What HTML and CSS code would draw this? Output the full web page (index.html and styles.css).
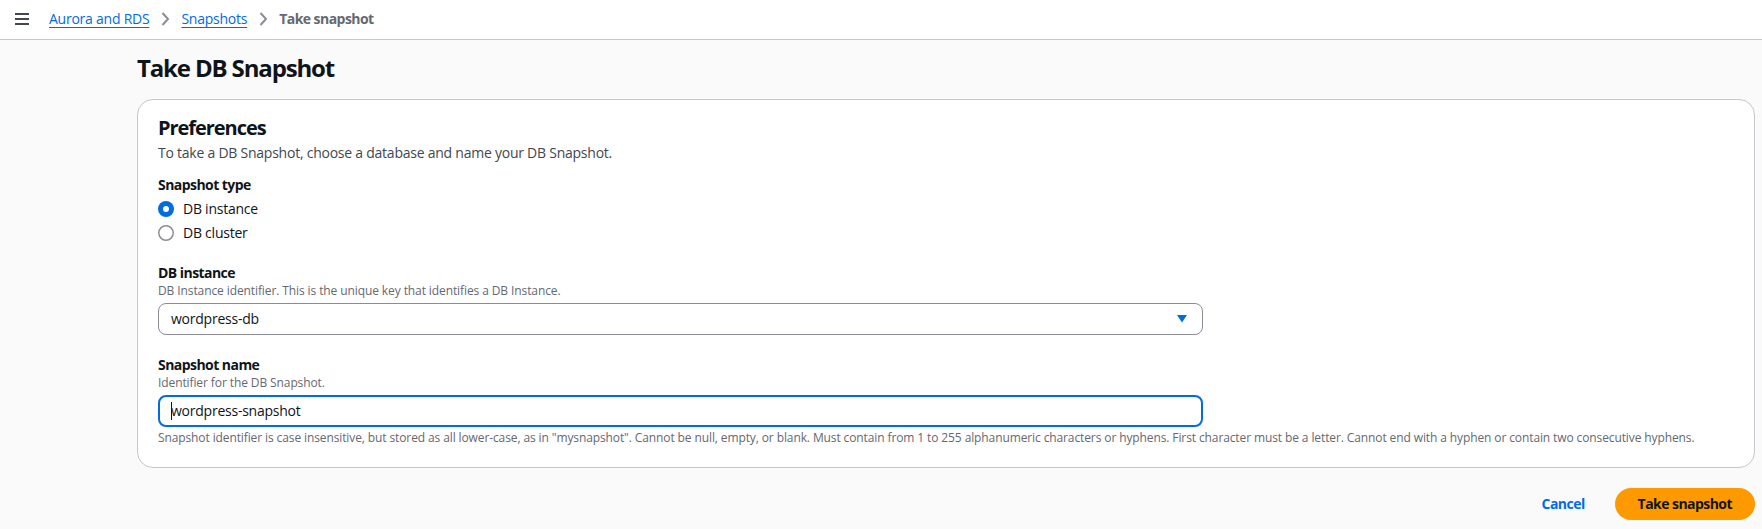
FILE: index.html
```html
<!DOCTYPE html>
<html lang="en">
<head>
<meta charset="utf-8">
<title>Take DB Snapshot</title>
<link rel="stylesheet" href="styles.css">
</head>
<body>
<header class="topbar">
  <button class="menu-btn" aria-label="Open navigation">
    <svg viewBox="0 0 16 16" width="16" height="16" aria-hidden="true"><path d="M15 8H1M15 3H1M15 13H1" fill="none" stroke="#424650" stroke-width="2"/></svg>
  </button>
  <nav class="crumbs" aria-label="Breadcrumbs">
    <a class="crumb-link" href="#">Aurora and RDS</a>
    <svg class="chev" viewBox="0 0 16 16" width="16" height="16" aria-hidden="true"><path d="m5.5 2 5.5 6-5.5 6" fill="none" stroke="#8c8c94" stroke-width="2"/></svg>
    <a class="crumb-link" href="#">Snapshots</a>
    <svg class="chev" viewBox="0 0 16 16" width="16" height="16" aria-hidden="true"><path d="m5.5 2 5.5 6-5.5 6" fill="none" stroke="#8c8c94" stroke-width="2"/></svg>
    <span class="crumb-current">Take snapshot</span>
  </nav>
</header>
<main class="content">
  <h1 class="page-title">Take DB Snapshot</h1>
  <section class="card">
    <h2 class="card-title">Preferences</h2>
    <p class="card-desc">To take a DB Snapshot, choose a database and name your DB Snapshot.</p>

    <div class="field field-radios">
      <div class="field-label">Snapshot type</div>
      <div class="radio-group">
        <label class="radio">
          <svg class="radio-ctl" viewBox="0 0 16 16" width="16" height="16" aria-hidden="true"><circle cx="8" cy="8" r="8" fill="#006ce0"/><circle cx="8" cy="8" r="3" fill="#fff"/></svg>
          <span>DB instance</span>
        </label>
        <label class="radio">
          <svg class="radio-ctl" viewBox="0 0 16 16" width="16" height="16" aria-hidden="true"><circle cx="8" cy="8" r="7.25" fill="#fff" stroke="#8c8c94" stroke-width="1.5"/></svg>
          <span>DB cluster</span>
        </label>
      </div>
    </div>

    <div class="field">
      <div class="field-label">DB instance</div>
      <div class="field-desc">DB Instance identifier. This is the unique key that identifies a DB Instance.</div>
      <div class="select">
        <span>wordpress-db</span>
        <svg class="caret" viewBox="0 0 10 8" width="10" height="8" aria-hidden="true"><polygon points="0,0 10,0 5,7.5" fill="#006ce0"/></svg>
      </div>
    </div>

    <div class="field">
      <div class="field-label">Snapshot name</div>
      <div class="field-desc">Identifier for the DB Snapshot.</div>
      <div class="input"><span class="caret-bar"></span><span>wordpress-snapshot</span></div>
      <div class="constraint">Snapshot identifier is case insensitive, but stored as all lower-case, as in "mysnapshot". Cannot be null, empty, or blank. Must contain from 1 to 255 alphanumeric characters or hyphens. First character must be a letter. Cannot end with a hyphen or contain two consecutive hyphens.</div>
    </div>
  </section>
  <div class="actions">
    <a class="btn-link" href="#">Cancel</a>
    <button class="btn-primary">Take snapshot</button>
  </div>
</main>
</body>
</html>
```

FILE: styles.css
```css
* { box-sizing: border-box; }

html, body {
  margin: 0;
  padding: 0;
}

body {
  background: #fafafa;
  color: #0f141a;
  font-family: "Open Sans", "Noto Sans", Arial, sans-serif;
  font-size: 14px;
  line-height: 20px;
  letter-spacing: -0.24px;
}

.topbar {
  height: 40px;
  background: #ffffff;
  border-bottom: 1px solid #c6c6cd;
  display: flex;
  align-items: center;
  padding: 0 0 1px 14px;
}

.menu-btn {
  border: 0;
  background: none;
  padding: 0;
  width: 16px;
  height: 16px;
  display: flex;
  cursor: pointer;
}

.crumbs {
  display: flex;
  align-items: center;
  margin-left: 19px;
}

.crumb-link {
  color: #006ce0;
  text-decoration: underline;
  text-underline-offset: 3px;
  text-decoration-thickness: 1px;
}

.chev {
  margin: 0 8px;
  display: block;
}

.crumb-current {
  color: #656871;
  font-weight: 700;
  letter-spacing: -0.55px;
}

.content {
  padding: 0 7px 0 137px;
}

.page-title {
  margin: 0;
  padding-top: 13px;
  font-size: 24px;
  line-height: 30px;
  font-weight: 700;
  letter-spacing: -1.15px;
}

.card {
  margin-top: 16px;
  background: #ffffff;
  border: 1px solid #c6c6cd;
  border-radius: 16px;
  padding: 16px 20px 21px 20px;
}

.card-title {
  margin: 0;
  font-size: 20px;
  line-height: 24px;
  font-weight: 700;
  letter-spacing: -1.05px;
}

.card-desc {
  margin: 3px 0 0 0;
  color: #424650;
}

.field {
  margin-top: 20px;
}

.field-radios {
  margin-top: 12px;
}

.field-label {
  font-weight: 700;
  letter-spacing: -0.55px;
}

.radio-group {
  display: flex;
  flex-direction: column;
  gap: 4px;
  padding-top: 4px;
}

.radio {
  display: flex;
  align-items: center;
  gap: 9px;
}

.radio-ctl {
  display: block;
  flex: none;
}

.field-desc {
  color: #656871;
  font-size: 12px;
  line-height: 16px;
  letter-spacing: -0.1px;
}

.select, .input {
  width: 1045px;
  height: 32px;
  margin-top: 4px;
  border-radius: 8px;
  background: #ffffff;
  display: flex;
  align-items: center;
  padding: 0 15px 0 12px;
}

.select {
  border: 1px solid #8c8c94;
  justify-content: space-between;
}

.caret {
  display: block;
}

.input {
  border: 2px solid #006ce0;
  padding-left: 11px;
}

.caret-bar {
  width: 1px;
  height: 18px;
  background: #0f141a;
  margin-right: -1px;
}

.constraint {
  margin-top: 3px;
  color: #656871;
  font-size: 12px;
  line-height: 16px;
  letter-spacing: -0.11px;
}

.actions {
  display: flex;
  justify-content: flex-end;
  align-items: center;
  gap: 8px;
  margin-top: 20px;
}

.btn-link {
  color: #006ce0;
  font-weight: 700;
  letter-spacing: -0.55px;
  text-decoration: none;
  padding: 6px 22px;
}

.btn-primary {
  height: 32px;
  border: 0;
  border-radius: 16px;
  background: #ff9900;
  color: #0f141a;
  font-family: inherit;
  font-size: 14px;
  font-weight: 700;
  letter-spacing: -0.55px;
  line-height: 20px;
  padding: 0 23px;
  cursor: pointer;
}
```
